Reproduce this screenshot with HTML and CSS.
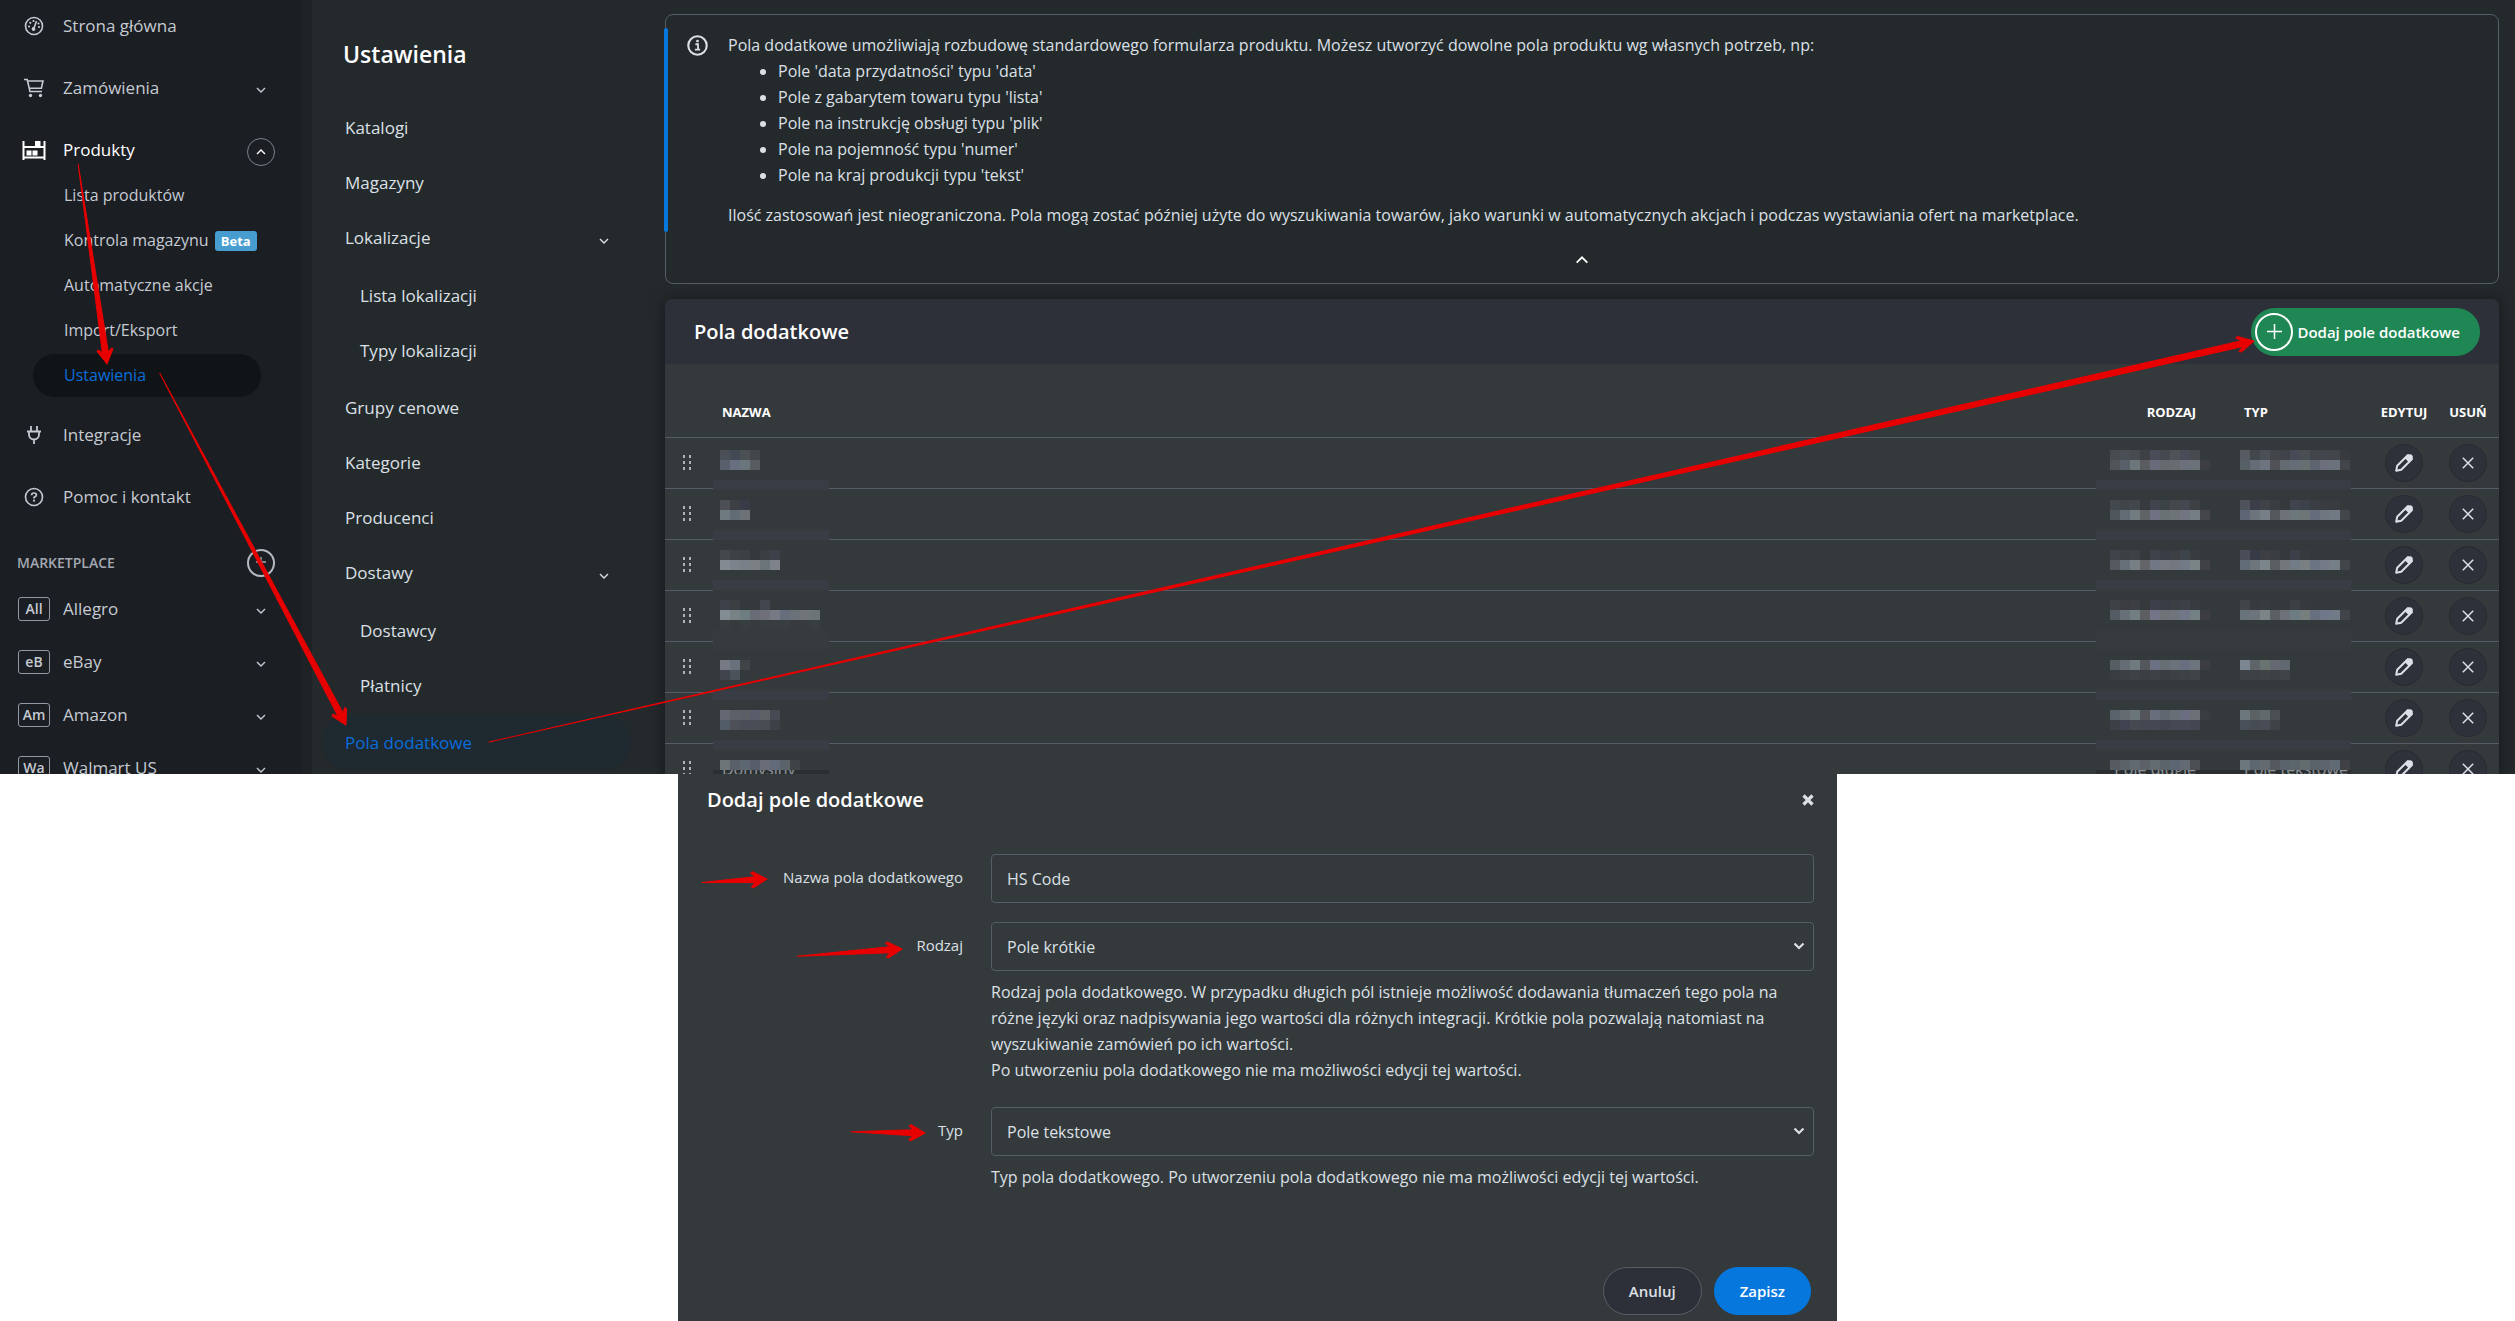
FILE: index.html
```
<!DOCTYPE html>
<html lang="pl">
<head>
    <meta charset="UTF-8">
    <meta name="viewport" content="width=device-width, initial-scale=1.0">
    <title>Pola dodatkowe</title>
    <link rel="stylesheet" href="styles.css">
</head>
<body>
    <svg class="symbols" width="0" height="0" aria-hidden="true">
        <symbol id="down" viewBox="0 0 10 6"><path d="M1 1l4 4 4-4" fill="none" stroke="currentColor" stroke-width="1.4"/></symbol>
        <symbol id="up" viewBox="0 0 10 6"><path d="M1 5l4-4 4 4" fill="none" stroke="currentColor" stroke-width="1.4"/></symbol>
        <symbol id="grip" viewBox="0 0 10 16"><path d="M1 0h2v3H1zM7 0h2v3H7zM1 6h2v3H1zM7 6h2v3H7zM1 12h2v3H1zM7 12h2v3H7z" fill="currentColor"/></symbol>
        <symbol id="pencil" viewBox="0 0 20 20"><path d="M2.2 17.8l1-5L14 2l4 4L7.2 16.8z" fill="none" stroke="currentColor" stroke-width="2" stroke-linejoin="round"/><path d="M10.8 5.2L15 1.5Q16.5 .6 18 2t.6 3.2L14.8 9.2z" fill="currentColor"/></symbol>
        <symbol id="cross" viewBox="0 0 12 12"><path d="M.8.8l10.4 10.4M11.2.8L.8 11.2" stroke="currentColor" stroke-width="1.5"/></symbol>
    </svg>

    <div class="app">
        <nav class="sidebar">
            <a class="nav-row" href="#">
                <svg class="nav-icon" viewBox="0 0 20 20"><circle cx="10" cy="10" r="8.5" fill="none" stroke="currentColor" stroke-width="1.6"/><path d="M12.5 5L10 12" stroke="currentColor" stroke-width="1.6"/><circle cx="9.5" cy="13" r="1.9" fill="currentColor"/><g fill="currentColor"><circle cx="5" cy="10.5" r="1.1"/><circle cx="6.3" cy="6.8" r="1.1"/><circle cx="9.5" cy="5" r="1.1"/><circle cx="14.5" cy="7.5" r="1.1"/><circle cx="15" cy="11" r="1.1"/></g></svg>
                <span>Strona główna</span>
            </a>
            <a class="nav-row" href="#">
                <svg class="nav-icon" viewBox="0 0 20 20"><path d="M0 1.5h3.2L6 13.500h12M3.600 3H19l-1.600 7.200H5.400" fill="none" stroke="currentColor" stroke-width="1.6"/><circle cx="6.500" cy="17.500" r="1.700" fill="currentColor"/><circle cx="16.500" cy="17.500" r="1.700" fill="currentColor"/></svg>
                <span>Zamówienia</span>
                <svg class="chevron"><use href="#down"/></svg>
            </a>
            <div>
                <a class="nav-row nav-open" href="#">
                    <svg class="nav-icon nav-wide" viewBox="0 0 24 20"><path d="M1.500 1v19M22.500 1v19M1 7h22M1 17.500h22" stroke="currentColor" stroke-width="2"/><path d="M13 1h5.500v5H13zM4.500 10.500h5v5h-5zM10.500 10.500h5v5h-5z" fill="currentColor"/></svg>
                    <span>Produkty</span>
                    <span class="ring"><svg class="chevron"><use href="#up"/></svg></span>
                </a>
                <div class="sub-nav">
                    <a href="#">Lista produktów</a>
                    <a href="#">Kontrola magazynu <span class="badge">Beta</span></a>
                    <a href="#">Automatyczne akcje</a>
                    <a href="#">Import/Eksport</a>
                    <a class="active" href="#">Ustawienia</a>
                </div>
            </div>
            <a class="nav-row" href="#">
                <svg class="nav-icon" viewBox="0 0 20 20"><path d="M7 1v5M13 1v5M3 6.500h14M5 7v2.500a5 5 0 0 0 10 0V7M10 14.500V19" fill="none" stroke="currentColor" stroke-width="1.800"/></svg>
                <span>Integracje</span>
            </a>
            <a class="nav-row" href="#">
                <svg class="nav-icon" viewBox="0 0 20 20"><circle cx="10" cy="10" r="8.5" fill="none" stroke="currentColor" stroke-width="1.6"/><path d="M7.600 8.200Q7.600 6 10 6t2.400 1.900Q12.400 9.100 10 10.500v1" fill="none" stroke="currentColor" stroke-width="1.700"/><circle cx="10" cy="13.700" r="1.100" fill="currentColor"/></svg>
                <span>Pomoc i kontakt</span>
            </a>
            <div class="market">
                <div class="market-head">
                    <span>MARKETPLACE</span>
                    <button class="ring ring-add" aria-label="Dodaj marketplace"><svg width="12" height="12" viewBox="0 0 12 12"><path d="M6 0v10M1 5h10" stroke="currentColor" stroke-width="1.4"/></svg></button>
                </div>
                <a class="market-row" href="#"><span class="tag">All</span><span>Allegro</span><svg class="chevron"><use href="#down"/></svg></a>
                <a class="market-row" href="#"><span class="tag">eB</span><span>eBay</span><svg class="chevron"><use href="#down"/></svg></a>
                <a class="market-row" href="#"><span class="tag">Am</span><span>Amazon</span><svg class="chevron"><use href="#down"/></svg></a>
                <a class="market-row" href="#"><span class="tag">Wa</span><span>Walmart US</span><svg class="chevron"><use href="#down"/></svg></a>
            </div>
        </nav>

        <nav class="settings">
            <h1>Ustawienia</h1>
            <a href="#">Katalogi</a>
            <a href="#">Magazyny</a>
            <a href="#">Lokalizacje <svg class="chevron"><use href="#down"/></svg></a>
            <div class="nested">
                <a href="#">Lista lokalizacji</a>
                <a href="#">Typy lokalizacji</a>
            </div>
            <a href="#">Grupy cenowe</a>
            <a href="#">Kategorie</a>
            <a href="#">Producenci</a>
            <a href="#">Dostawy <svg class="chevron"><use href="#down"/></svg></a>
            <div class="nested">
                <a href="#">Dostawcy</a>
                <a href="#">Płatnicy</a>
            </div>
            <a class="active" href="#">Pola dodatkowe</a>
        </nav>

        <main class="content">
            <section class="info">
                <div class="info-body">
                    <svg class="info-icon" viewBox="0 0 20 20"><circle cx="10" cy="10" r="8.800" fill="none" stroke="currentColor" stroke-width="2"/><path d="M8 8.800h2.500V14M7.500 14h5" fill="none" stroke="currentColor" stroke-width="1.700"/><circle cx="10" cy="5.800" r="1.300" fill="currentColor"/></svg>
                    <div>
                        <p>Pola dodatkowe umożliwiają rozbudowę standardowego formularza produktu. Możesz utworzyć dowolne pola produktu wg własnych potrzeb, np:</p>
                        <ul>
                            <li>Pole 'data przydatności' typu 'data'</li>
                            <li>Pole z gabarytem towaru typu 'lista'</li>
                            <li>Pole na instrukcję obsługi typu 'plik'</li>
                            <li>Pole na pojemność typu 'numer'</li>
                            <li>Pole na kraj produkcji typu 'tekst'</li>
                        </ul>
                        <p>Ilość zastosowań jest nieograniczona. Pola mogą zostać później użyte do wyszukiwania towarów, jako warunki w automatycznych akcjach i podczas wystawiania ofert na marketplace.</p>
                    </div>
                </div>
                <button class="collapse" aria-label="Zwiń"><svg class="chevron"><use href="#up"/></svg></button>
            </section>

            <section class="card">
                <header class="card-head">
                    <h2>Pola dodatkowe</h2>
                    <button class="add"><svg width="38" height="38" viewBox="0 0 38 38"><circle cx="19" cy="19" r="18" fill="none" stroke="currentColor" stroke-width="2"/><path d="M19.500 11v15M12 18.500h15" stroke="currentColor" stroke-width="1.500"/></svg>Dodaj pole dodatkowe</button>
                </header>
                <table>
                    <thead>
                        <tr>
                            <th class="col-grip"></th>
                            <th>NAZWA</th>
                            <th class="col-kind">RODZAJ</th>
                            <th class="col-type">TYP</th>
                            <th class="col-edit">EDYTUJ</th>
                            <th class="col-del">USUŃ</th>
                        </tr>
                    </thead>
                    <tbody id="rows"></tbody>
                </table>
                <svg class="mask mask-name" id="maskName" width="116" height="334"></svg>
                <svg class="mask mask-kind" id="maskKind" width="255" height="334"></svg>
            </section>
        </main>
    </div>

    <form class="dialog">
        <header class="dialog-head">
            <h2>Dodaj pole dodatkowe</h2>
            <button type="button" class="close" aria-label="Zamknij"><svg width="12" height="12" viewBox="0 0 12 12"><path d="M1.500 1.500l9 9M10.500 1.500l-9 9" stroke="currentColor" stroke-width="3.200"/></svg></button>
        </header>
        <div class="field">
            <label for="name">Nazwa pola dodatkowego</label>
            <input id="name" type="text" value="HS Code">
        </div>
        <div class="field">
            <label for="kind">Rodzaj</label>
            <div>
                <div class="select">
                    <select id="kind"><option>Pole krótkie</option></select>
                    <svg class="arrow" viewBox="0 0 12 8"><path d="M1.500 1.500L6 6l4.500-4.500" fill="none" stroke="currentColor" stroke-width="2.200"/></svg>
                </div>
                <p class="help">Rodzaj pola dodatkowego. W przypadku długich pól istnieje możliwość dodawania tłumaczeń tego pola na różne języki oraz nadpisywania jego wartości dla różnych integracji. Krótkie pola pozwalają natomiast na wyszukiwanie zamówień po ich wartości.<br>Po utworzeniu pola dodatkowego nie ma możliwości edycji tej wartości.</p>
            </div>
        </div>
        <div class="field">
            <label for="type">Typ</label>
            <div>
                <div class="select">
                    <select id="type"><option>Pole tekstowe</option></select>
                    <svg class="arrow" viewBox="0 0 12 8"><path d="M1.500 1.500L6 6l4.500-4.500" fill="none" stroke="currentColor" stroke-width="2.200"/></svg>
                </div>
                <p class="help">Typ pola dodatkowego. Po utworzeniu pola dodatkowego nie ma możliwości edycji tej wartości.</p>
            </div>
        </div>
        <footer class="dialog-foot">
            <button type="button" class="btn">Anuluj</button>
            <button type="submit" class="btn btn-save">Zapisz</button>
        </footer>
    </form>

    <!-- step arrows, each drawn along the x axis with the tip at 0,0 -->
    <svg class="steps" viewBox="0 0 2515 1321" aria-hidden="true">
        <path transform="translate(107 364) rotate(81.8)" d="M0 0L-14-8-15-7-12-3-202 0-12 3-15 7-14 8z"/>
        <path transform="translate(346 725) rotate(62.1)" d="M0 0L-14-8-16-7-12-3-398 0-12 3-16 7-14 8z"/>
        <path transform="translate(2254 341) rotate(-12.8)" d="M0 0L-15-8-17-7-12-3-1810 0-12 3-17 7-15 8z"/>
        <path transform="translate(767 879) rotate(-3)" d="M0 0L-14-8-16-7-12-3-65 0-12 3-16 7-14 8z"/>
        <path transform="translate(902 949) rotate(-4)" d="M0 0L-14-8-16-7-12-3-105 0-12 3-16 7-14 8z"/>
        <path transform="translate(925 1133) rotate(1)" d="M0 0L-14-8-16-7-12-3-74 0-12 3-16 7-14 8z"/>
    </svg>
    <script src="script.js"></script>
</body>
</html>
```
FILE: styles.css
```
* {
    box-sizing: border-box;
}
body {
    margin: 0;
    height: 100vh;
    display: flex;
    flex-direction: column;
    position: relative;
    background-color: #fff;
    color: #dce0e6;
    font-family: "Open Sans", "Noto Sans", sans-serif;
    font-size: 16px;
    line-height: 26px;
}
h1, h2, p, ul {
    margin: 0;
}
h1, h2 {
    color: #fff;
    font-size: 20px;
    font-weight: 600;
}
a {
    color: inherit;
    text-decoration: none;
}
button {
    font: inherit;
    color: inherit;
    cursor: pointer;
}
.symbols {
    display: none;
}
.chevron {
    width: 10px;
    height: 6px;
}
.app {
    flex: 1 1 0;
    min-height: 0;
    overflow: hidden;
    display: grid;
    grid-template-columns: 312px 353px 1fr;
    padding-right: 16px;
    background-color: #24292c;
}

/* left menu */
.sidebar {
    display: flex;
    flex-direction: column;
    gap: 14px;
    padding-top: 2px;
    background-color: #1b1e22;
    border-right: 11px solid #1f2224;
    color: #c5cad3;
    font-size: 17px;
}
.nav-row, .market-row {
    display: flex;
    align-items: center;
    height: 48px;
    padding: 0 35px 0 24px;
}
.nav-icon {
    width: 20px;
    height: 20px;
    margin-right: 19px;
}
.nav-wide {
    width: 24px;
    margin: 0 17px 0 -2px;
}
.nav-row .chevron, .market-row .chevron {
    margin: 4px 0 0 auto;
}
.nav-open {
    color: #fff;
    font-weight: 500;
    padding-right: 26px;
}
.ring {
    display: flex;
    align-items: center;
    justify-content: center;
    width: 28px;
    height: 28px;
    margin-left: auto;
    border: 1px solid #7d8290;
    border-radius: 50%;
}
.nav-open .ring {
    margin-top: 4px;
}
.nav-open .ring .chevron {
    margin: 0;
}
.ring-add {
    padding: 0;
    background: none;
    border: 2px solid #b5b9c2;
}
.sub-nav {
    display: flex;
    flex-direction: column;
    gap: 2px;
    padding: 0 40px 0 33px;
    font-size: 16px;
}
.sub-nav a {
    height: 43px;
    padding: 0 0 0 31px;
    line-height: 43px;
    white-space: nowrap;
    border-radius: 22px;
}
.sub-nav .active {
    background-color: #111416;
}
.active {
    color: #0a6ddc;
}
.badge {
    display: inline-block;
    margin-left: 2px;
    padding: 0 6px;
    border-radius: 3px;
    background-color: #479dd0;
    color: #fff;
    font-size: 13px;
    font-weight: 700;
    line-height: 20px;
}
.market {
    padding-top: 13px;
}
.market-head {
    display: flex;
    align-items: center;
    height: 30px;
    margin-bottom: 4px;
    padding: 0 26px 0 17px;
    color: #a3a8b2;
    font-size: 14px;
    font-weight: 600;
}
.market-row {
    height: 53px;
    padding-left: 18px;
}
.tag {
    width: 32px;
    height: 24px;
    margin-right: 13px;
    border: 1px solid #9398a5;
    border-radius: 3px;
    font-size: 14px;
    font-weight: 600;
    line-height: 22px;
    text-align: center;
}

/* settings menu */
.settings {
    padding: 14px 34px 0 10px;
    font-size: 17px;
}
.settings h1 {
    height: 86px;
    padding: 27px 0 0 21px;
    font-size: 23px;
}
.settings a {
    display: flex;
    align-items: center;
    justify-content: space-between;
    height: 55px;
    padding: 0 22px 0 23px;
    border-radius: 28px;
}
.settings .chevron {
    margin-top: 6px;
}
.settings .active {
    background-color: #1e2930;
}
.nested {
    padding: 3px 0 2px 15px;
}

/* info box */
.content {
    min-width: 0;
    padding-top: 14px;
}
.info {
    margin-bottom: 15px;
    border: 1px solid #565d69;
    border-radius: 8px;
}
.info-body {
    position: relative;
    display: flex;
    gap: 20px;
    margin-top: 13px;
    padding: 4px 21px;
}
.info-body::before {
    content: "";
    position: absolute;
    top: 0;
    bottom: 0;
    left: -2px;
    width: 4px;
    border-radius: 2px;
    background-color: #0577dd;
}
.info-icon {
    flex: none;
    width: 21px;
    height: 21px;
    margin-top: 3px;
}
.info ul {
    margin-bottom: 14px;
    padding-left: 50px;
}
.collapse {
    display: flex;
    align-items: center;
    justify-content: center;
    width: 100%;
    height: 51px;
    padding: 4px 0 0;
    border: 0;
    background: none;
    color: #fff;
}
.collapse .chevron {
    width: 14px;
    height: 8px;
}

/* list of fields */
.card {
    position: relative;
    border-radius: 8px 8px 0 0;
    background-color: #34393c;
    box-shadow: 0 0 16px rgba(0, 0, 0, 0.4);
}
.card-head {
    display: flex;
    align-items: center;
    justify-content: space-between;
    height: 65px;
    padding: 0 19px 0 29px;
    border-radius: 8px 8px 0 0;
    background-color: #2d3038;
}
.add {
    display: flex;
    align-items: center;
    gap: 4px;
    height: 48px;
    padding: 0 20px 0 4px;
    border: 0;
    border-radius: 24px;
    background-color: #1f8754;
    color: #fff;
    font-size: 15px;
    font-weight: 600;
}
table {
    width: 100%;
    table-layout: fixed;
    border-collapse: collapse;
}
th, td {
    padding: 0;
    border-bottom: 1px solid #555b67;
    text-align: left;
}
th {
    height: 73px;
    padding-top: 24px;
    color: #fff;
    font-size: 13px;
    font-weight: 700;
}
td {
    height: 51px;
}
th:nth-child(2), td:nth-child(2) {
    padding-left: 9px;
}
.col-grip {
    width: 48px;
}
.col-kind, td:nth-child(3) {
    width: 140px;
    padding-right: 24px;
    text-align: right;
}
.col-type, td:nth-child(4) {
    width: 151px;
    padding-left: 24px;
}
.col-edit {
    width: 66px;
    text-align: center;
}
.col-del {
    width: 62px;
    text-align: center;
}
.grip {
    display: block;
    width: 10px;
    height: 16px;
    margin-left: 17px;
    color: #aeb3bb;
}
.round {
    display: flex;
    align-items: center;
    justify-content: center;
    width: 38px;
    height: 38px;
    margin: 0 auto;
    padding: 0;
    border: 1px solid #282b31;
    border-radius: 50%;
    background-color: #2e3139;
}
.round svg {
    width: 12px;
    height: 12px;
}
.round .pencil {
    width: 20px;
    height: 20px;
}
.mask {
    position: absolute;
    top: 141px;
    shape-rendering: crispEdges;
}
.mask-name {
    left: 48px;
}
.mask-kind {
    right: 148px;
}

/* dialog */
.dialog {
    width: 1159px;
    max-width: 100%;
    margin: 0 auto;
    padding: 0 23px 6px 29px;
    background-color: #34393c;
}
.dialog-head {
    display: flex;
    align-items: center;
    justify-content: space-between;
    height: 52px;
    margin-bottom: 28px;
}
.close {
    display: flex;
    padding: 0;
    border: 0;
    background: none;
}
.field {
    display: grid;
    grid-template-columns: 256px 1fr;
    column-gap: 28px;
    margin-bottom: 19px;
}
.field label {
    font-size: 15px;
    line-height: 47px;
    text-align: right;
}
input, select {
    width: 100%;
    height: 49px;
    padding: 0 15px;
    appearance: none;
    border: 1px solid #565d69;
    border-radius: 4px;
    background-color: transparent;
    color: inherit;
    font: inherit;
}
.select {
    position: relative;
}
.arrow {
    position: absolute;
    top: 20px;
    right: 9px;
    width: 12px;
    height: 8px;
}
.help {
    padding: 8px 0 5px;
}
.dialog-foot {
    display: flex;
    justify-content: flex-end;
    gap: 12px;
    margin-top: 72px;
    padding-right: 3px;
}
.btn {
    height: 48px;
    padding: 0 25px;
    border: 1px solid #565d69;
    border-radius: 24px;
    background-color: #2d3038;
    font-size: 15px;
    font-weight: 600;
}
.btn-save {
    border-color: #0577dd;
    background-color: #0577dd;
    color: #fff;
}
.steps {
    position: absolute;
    top: 0;
    left: 0;
    width: 100%;
    fill: #e80000;
    stroke: #e80000;
    stroke-width: 1;
    stroke-linejoin: round;
    pointer-events: none;
}
```
FILE: script.js
```
const rows = [["", "", ""], ["", "", ""], ["", "", ""], ["", "", ""], ["", "", ""], ["", "", ""], ["Domyślny", "Pole długie", "Pole tekstowe"]];

document.getElementById("rows").innerHTML = rows.map(row => `
    <tr>
        <td><svg class="grip"><use href="#grip"/></svg></td>
        <td>${row[0]}</td><td>${row[1]}</td><td>${row[2]}</td>
        <td><button class="round" aria-label="Edytuj"><svg class="pencil"><use href="#pencil"/></svg></button></td>
        <td><button class="round" aria-label="Usuń"><svg><use href="#cross"/></svg></button></td>
    </tr>`).join("");

// mosaic over the private values: [x, y, colours of the 10px cells]
const names = [
    [7, 10, "4b5058 434a55 4b5052 43474a"], [7, 20, "5a606b 687080 6b757c 585e60"],
    [7, 60, "4c5056 3c4045 383c46"], [7, 70, "6f7a80 626c74 6c7276"],
    [7, 110, "44484c 3e4245 3c3f43 34393c 3b3f44 3d414b"], [7, 120, "848a92 7c838c 7a8088 7a8083 6b7479 7e828b"],
    [7, 160, "3d4149 3a3f42 34393c 34393c 41454d"], [7, 170, "848c93 788285 6e7e80 686c76 6f7079 777a84 656e7a 6c727a 6f7578 6c7478"],
    [7, 180, "383d3f 373b3e 383d3f 373b3e 383d3f 383d3f 383d3f 373b3e 373b3e 383d3f"],
    [7, 220, "767a84 68717c 404447"], [7, 230, "40454d 4b525a"],
    [7, 270, "646872 5b6069 5b5f66 585c6b 5c6166 464a53"], [7, 280, "525c66 4d5058 4a4c58 4a4d56 4a4c53 3e4147"],
    [7, 320, "6c7478 5a5f69 5d6771 575e69 696d77 636a7a 5a6369 3f4346"]
];
const kinds = [
    [14, 10, "484c50 4a4f55 474c50 3d4045 4a4d58 464a50 4f5357 4a4d57 474b50"], [14, 20, "50555a 5a606a 6b777a 5a5c5f 686c7a 656a6e 686c70 6c707c 6b727a 3d3e41"],
    [14, 60, "43484c 40454a 42474b 373b3f 40444e 3b4347 44484b 43474f 3d4144"], [14, 70, "50575c 626a73 707c80 606366 6e7282 6a7175 6e7378 727683 767e85 444548"],
    [14, 110, "40444a 3c4043 3e4246 34393c 3f424a 383c45 3c4044 3e444b 383c3f"], [14, 120, "545a5f 676f78 757f84 636568 727784 757981 727780 727a87 7a8386 404144"],
    [14, 160, "3e4247 3a3c42 3b3f43 34393c 3d404a 393c44 3b3f44 3c4047 383c41"], [14, 170, "555b62 676f78 737e82 5c5e61 717587 6e7378 70747d 717689 738084 3d3d41"],
    [14, 220, "565d63 656c75 707b7f 54575b 6c7083 686f74 6c727b 6a6e80 6c757d 3b3d40"], [14, 230, "383d41 3c4044 3e4246 3b3e43 3e4145 3a3e43 3d4144 3e4247 404449"],
    [14, 270, "59626b 646c72 6a767a 54555a 696e7c 606770 686e76 6a6e80 6b7177 3a3d3f"], [14, 280, "3b4047 404450 454952 434751 454753 414550 454953 464955 444752"],
    [14, 320, "555b60 5c6368 616a70 5c6167 626b70 5b636b 5c6573 636a72 4b4f54"]
];
const types = [
    [144, 10, "565b62 42474c 4a5055 424549 404349 474b57 4a4f53 42464b 42454b 42464b 383a3e"], [144, 20, "565e66 656c76 6d7480 505257 646b70 656e76 686f70 5d6470 6c707c 6b727c 424549"],
    [144, 60, "4e535b 3b3e48 3f4348 3a3d41 34393c 40444f 3d414a 3a3d43 383c40 383c41"], [144, 70, "5e6575 6d747c 767f88 54585c 6d7178 6c777b 6e7576 656c7b 70767f 717984 44474a"],
    [144, 110, "4a4d57 363b47 3e3f43 3a3d42 34393c 3d404a 373b3e"], [144, 120, "616b75 6e757c 7c8589 5a5f62 727779 717c86 7a8081 6b7482 747b86 757f87 424649"],
    [144, 160, "414549 373b3f 383c3f 34393c 34393c 3d4144 363a3d"], [144, 170, "68737a 6d747c 7c8487 5c6063 6d727a 6d7b83 767e7e 686f7f 71778a 717a87 414448"],
    [144, 220, "7c8692 5f6468 69736f 656a72 62686f"], [144, 230, "3e4247 3e4246 3f4347 3d4146 404448"],
    [144, 270, "6b777d 5c6164 62696c 4a4f52"], [144, 280, "4a5059 474b54 484c57 3f4347"],
    [144, 320, "6b777c 5d6770 636b70 53595e 5a636b 5a656c 626c6f 596268 5d646e 606a74 3f4144"]
];

function drawMask(id, width, cells) {
    const rect = (x, y, w, h, fill) => `<rect x="${x}" y="${y}" width="${w}" height="${h}" fill="${fill}"/>`;
    let out = rect(0, 0, width, 330, "#34393c") + rect(0, 330, width, 4, "rgba(30,32,35,.4)");
    [40, 90, 140, 250, 300].forEach(y => out += rect(0, y, width, 10, "#383c44"));
    out += rect(0, 190, width, 20, "#373b3e");
    cells.forEach(([x, y, colours]) => colours.split(" ").forEach((c, i) => out += rect(x + i * 10, y, 10, 10, "#" + c)));
    document.getElementById(id).innerHTML = out;
}
drawMask("maskName", 116, names);
drawMask("maskKind", 255, kinds.concat(types));
```
